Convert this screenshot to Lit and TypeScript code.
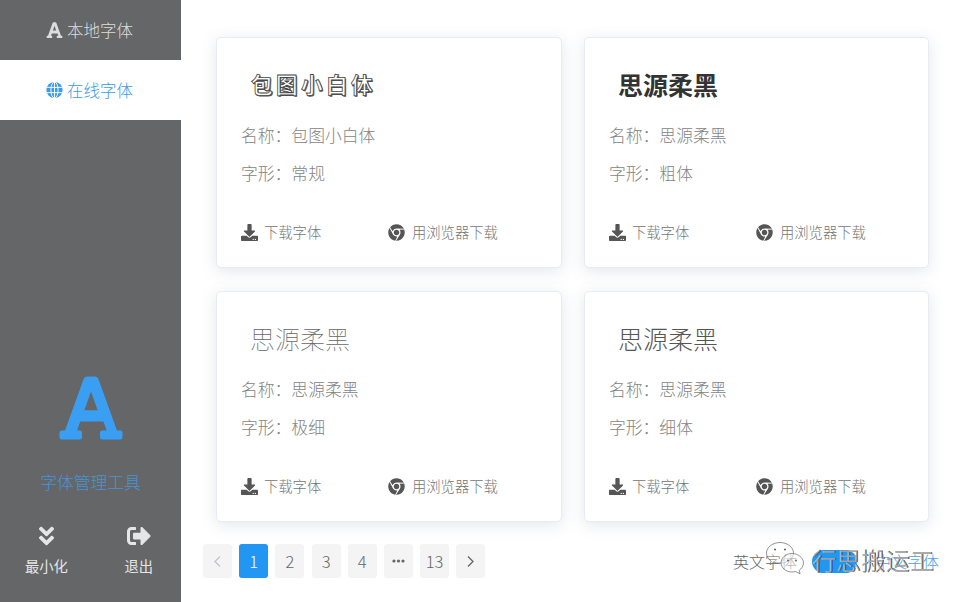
import { LitElement, html, css, svg } from "lit";
import { customElement } from "lit/decorators.js";

const FONT = svg`<path d="M432 416h-23.41L277.88 53.69A32 32 0 0 0 247.58 32h-47.16a32 32 0 0 0-30.3 21.69L39.41 416H16a16 16 0 0 0-16 16v32a16 16 0 0 0 16 16h128a16 16 0 0 0 16-16v-32a16 16 0 0 0-16-16h-19.12l22.75-64h164.74l22.75 64H304a16 16 0 0 0-16 16v32a16 16 0 0 0 16 16h128a16 16 0 0 0 16-16v-32a16 16 0 0 0-16-16zM176.85 272L224 138.32 271.15 272H176.85z"/>`;
const DOWNLOAD = svg`<path d="M216 0h80c13.3 0 24 10.7 24 24v168h87.7c17.8 0 26.7 21.5 14.1 34.1L269.7 378.3c-7.5 7.5-19.8 7.5-27.3 0L90.1 226.1c-12.6-12.6-3.7-34.1 14.1-34.1H192V24c0-13.3 10.7-24 24-24zm296 376v112c0 13.3-10.7 24-24 24H24c-13.3 0-24-10.7-24-24V376c0-13.3 10.7-24 24-24h146.7l49 49c20.1 20.1 52.5 20.1 72.6 0l49-49H488c13.3 0 24 10.7 24 24zm-124 88c0-11-9-20-20-20s-20 9-20 20 9 20 20 20 20-9 20-20zm64 0c0-11-9-20-20-20s-20 9-20 20 9 20 20 20 20-9 20-20z"/>`;
const CHROME = svg`<path d="M131.5 217.5L55.1 100.1c47.6-59.2 119-91.8 192-92.1 42.3-.3 85.5 10.5 124.8 33.2 43.4 25.2 76.4 61.4 97.4 103L264 133.4c-58.1-3.4-113.4 29.3-132.5 84.1zm32.9 38.5c0 46.2 37.4 83.6 83.6 83.6s83.6-37.4 83.6-83.6-37.4-83.6-83.6-83.6-83.6 37.3-83.6 83.6zm314.9-89.2L339.6 174c37.9 44.3 38.5 108.2 6.6 157.2L234.1 503.6c46.5 2.5 94.4-7.7 137.8-32.9 107.4-62 150.9-192 107.4-303.9zM133.7 303.6L40.4 120.1C14.9 159.1 0 205.9 0 256c0 124 90.8 226.7 209.5 244.9l63.7-124.8c-57.6 10.8-113.2-20.8-139.5-72.5z"/>`;

const fonts = [
  { title: "包图小白体", name: "包图小白体", style: "常规", cls: "fancy" },
  { title: "思源柔黑", name: "思源柔黑", style: "粗体", cls: "bold" },
  { title: "思源柔黑", name: "思源柔黑", style: "极细", cls: "thin" },
  { title: "思源柔黑", name: "思源柔黑", style: "细体", cls: "light" },
];

@customElement("app-root")
export class AppRoot extends LitElement {
  static styles = css`
    :host {
      display: flex;
      position: relative;
      width: 963px;
      height: 602px;
      overflow: hidden;
      background: #fff;
      font-family: "Noto Sans CJK SC", "Noto Sans", sans-serif;
      font-weight: 300;
      color: #666;
    }
    svg { fill: currentColor; display: block; flex: none; }
    .side {
      width: 181px;
      flex: none;
      background: #656668;
      display: flex;
      flex-direction: column;
      color: #ddd;
    }
    .nav {
      height: 60px;
      display: flex;
      align-items: center;
      justify-content: center;
      gap: 4px;
      font-size: 16.5px;
      padding-right: 2px;
    }
    .nav.on { background: #fff; color: #3a9be8; }
    .nav svg { width: 17px; height: 18px; }
    .brand {
      margin-top: auto;
      margin-bottom: 8px;
      display: flex;
      flex-direction: column;
      align-items: center;
      color: #3a9ff2;
    }
    .brand svg { width: 64px; height: 72px; }
    .brand .tool { font-size: 16.8px; line-height: 24px; margin-top: 26px; color: #4794d6; }
    .ops {
      display: flex;
      justify-content: space-between;
      padding: 22px 28px 0 25px;
      height: 100px;
      box-sizing: border-box;
    }
    .op { display: flex; flex-direction: column; align-items: center; font-size: 14.3px; color: #e6e6e6; font-weight: 400; }
    .op svg { height: 24px; margin-bottom: 7px; }
    .op .dbl { width: 15px; }
    .op .out { width: 24px; }
    .main { flex: 1; min-width: 0; display: flex; flex-direction: column; padding: 37px 0 0 22px; }
    .grid {
      display: grid;
      grid-template-columns: 346px 345px;
      grid-auto-rows: 231px;
      column-gap: 22px;
      row-gap: 23px;
      margin-left: 13px;
    }
    .card {
      background: #fff;
      border: 1px solid #e9ebef;
      border-radius: 5px;
      box-shadow: 0 3px 16px rgba(90, 100, 130, 0.16);
      box-sizing: border-box;
      padding: 0 24px;
      display: flex;
      flex-direction: column;
    }
    .title { font-size: 25px; line-height: 36px; margin: 28px 0 0 9px; height: 36px; white-space: nowrap; }
    .title.bold { font-weight: 700; color: #333; }
    .title.thin { font-weight: 100; color: #666; }
    .title.light { font-weight: 300; color: #555; }
    .title.fancy {
      font-weight: 700;
      font-size: 21.6px;
      letter-spacing: 3.4px;
      margin-left: 10px;
      color: #fff;
      -webkit-text-stroke: 0.8px #444;
      text-shadow: 1px 1px 0 #555;
    }
    .row { font-size: 16.8px; line-height: 24px; color: #848484; white-space: nowrap; }
    .row.a { margin-top: 21px; }
    .row.b { margin-top: 14px; }
    .acts { display: flex; margin-top: 35px; font-size: 14.3px; line-height: 24px; color: #757575; }
    .act { display: flex; align-items: center; gap: 6px; white-space: nowrap; }
    .act svg { color: #555; width: 17px; height: 17px; }
    .act.dl { width: 147px; }
    .act + .act { gap: 7px; }
    .foot { display: flex; align-items: center; margin-top: 22px; height: 34px; }
    .pages { display: flex; gap: 7.2px; }
    .p {
      width: 29px;
      height: 34px;
      border-radius: 3px;
      background: #f4f4f5;
      display: flex;
      align-items: center;
      justify-content: center;
      font-size: 16.5px;
      color: #666;
    }
    .p.on { background: #2196f3; color: #fff; }
    .p.off { color: #c0c4cc; }
    .p svg { width: 13px; height: 13px; fill: none; stroke: currentColor; stroke-width: 1.3; }
    .p .more { fill: currentColor; stroke: none; width: 13px; height: 4px; }
    .switch { margin-left: auto; display: flex; align-items: center; font-size: 16px; color: #666; padding-right: 24px; white-space: nowrap; }
    .pill { width: 45px; height: 23px; border-radius: 12px; background: #2196f3; margin: 0 18px 0 15px; }
    .cn { color: #4ba3ea; }
    .mark { position: absolute; left: 765px; top: 541px; display: flex; align-items: center; gap: 8px; }
    .mark svg { width: 39px; height: 36px; fill: none; }
    .mark span {
      font-family: "Noto Sans CJK SC", sans-serif;
      font-size: 24.3px;
      font-weight: 400;
      line-height: 36px;
      color: rgba(255, 255, 255, 0.55);
      text-shadow: 1px 0 0 rgba(40, 40, 40, 0.85);
      white-space: nowrap;
      position: relative;
      top: 1px;
    }
  `;

  private card(f: (typeof fonts)[number]) {
    return html`<div class="card">
      <div class="title ${f.cls}">${f.title}</div>
      <div class="row a">名称：${f.name}</div>
      <div class="row b">字形：${f.style}</div>
      <div class="acts">
        <div class="act dl"><svg viewBox="0 0 512 512">${DOWNLOAD}</svg>下载字体</div>
        <div class="act"><svg viewBox="0 0 496 512">${CHROME}</svg>用浏览器下载</div>
      </div>
    </div>`;
  }

  render() {
    return html`
      <aside class="side">
        <div class="nav"><svg viewBox="0 0 448 512">${FONT}</svg>本地字体</div>
        <div class="nav on">
          <svg viewBox="0 0 18 18">
            <circle cx="9" cy="9" r="8.6"></circle>
            <g fill="none" stroke="#fff" stroke-width="1">
              <ellipse cx="9" cy="9" rx="3.8" ry="8.6"></ellipse>
              <path d="M9 .4v17.2M.8 6.200h16.400M.8 11.800h16.400"></path>
            </g>
          </svg>
          在线字体
        </div>
        <div class="brand">
          <svg viewBox="0 0 448 512">${FONT}</svg>
          <div class="tool">字体管理工具</div>
        </div>
        <div class="ops">
          <div class="op">
            <svg class="dbl" viewBox="0 0 320 512"><path d="M143 256.3L7 120.3c-9.4-9.4-9.4-24.6 0-33.9l22.6-22.6c9.4-9.4 24.6-9.4 33.9 0l96.4 96.4 96.4-96.4c9.4-9.4 24.6-9.4 33.9 0L313 86.3c9.4 9.4 9.4 24.6 0 33.9l-136 136c-9.4 9.5-24.6 9.5-34 .1zm34 192l136-136c9.4-9.4 9.4-24.6 0-33.9l-22.6-22.6c-9.4-9.4-24.6-9.4-33.9 0L160 352.1l-96.4-96.4c-9.4-9.4-24.6-9.4-33.9 0L7 278.3c-9.4 9.4-9.4 24.6 0 33.9l136 136c9.4 9.5 24.6 9.5 34 .1z"></path></svg>
            最小化
          </div>
          <div class="op">
            <svg class="out" viewBox="0 0 512 512"><path d="M497 273L329 441c-15 15-41 4.5-41-17v-96H152c-13.3 0-24-10.7-24-24v-96c0-13.3 10.7-24 24-24h136V88c0-21.4 25.9-32 41-17l168 168c9.3 9.4 9.3 24.6 0 34zM192 436v-40c0-6.6-5.4-12-12-12H96c-17.7 0-32-14.3-32-32V160c0-17.7 14.3-32 32-32h84c6.6 0 12-5.4 12-12V76c0-6.6-5.4-12-12-12H96c-53 0-96 43-96 96v192c0 53 43 96 96 96h84c6.6 0 12-5.4 12-12z"></path></svg>
            退出
          </div>
        </div>
      </aside>
      <main class="main">
        <div class="grid">${fonts.map((f) => this.card(f))}</div>
        <div class="foot">
          <div class="pages">
            <div class="p off"><svg viewBox="0 0 13 13"><path d="M9 1.5L4 6.5l5 5"></path></svg></div>
            <div class="p on">1</div>
            <div class="p">2</div>
            <div class="p">3</div>
            <div class="p">4</div>
            <div class="p"><svg class="more" viewBox="0 0 13 4"><circle cx="2" cy="2" r="1.6"></circle><circle cx="6.5" cy="2" r="1.6"></circle><circle cx="11" cy="2" r="1.6"></circle></svg></div>
            <div class="p">13</div>
            <div class="p"><svg viewBox="0 0 13 13"><path d="M4 1.5l5 5-5 5"></path></svg></div>
          </div>
          <div class="switch">
            英文字体<div class="pill"></div><span class="cn">中文字体</span>
          </div>
        </div>
      </main>
      <div class="mark">
        <svg viewBox="0 0 39 36">
          <g stroke="#666" stroke-width="0.7">
            <path fill="rgba(255,255,255,.3)" d="M15 1.500C8 1.500 1.500 6 1.500 12c0 3.300 1.800 6 4.700 8l-1.200 3.600 4.200-2.100c1.500.4 3.500.6 5.800.6 7 0 13.500-4.500 13.500-10.100C28.500 6 22 1.500 15 1.500z"></path>
            <path fill="rgba(255,255,255,.55)" d="M27 12.500c-6 0-11 4.300-11 9.300S21 31 27 31c1.300 0 2.500-.2 3.700-.5l4.400 2.400-1-3.500c2.400-1.600 4.400-4.400 4.400-7.600C38.500 16.800 33 12.500 27 12.500z"></path>
          </g>
          <g fill="#666"><circle cx="10" cy="8.500" r="1.100"></circle><circle cx="20" cy="8.500" r="1.100"></circle><circle cx="23" cy="19.500" r="1"></circle><circle cx="31" cy="19.500" r="1"></circle></g>
        </svg>
        <span>行思搬运工</span>
      </div>
    `;
  }
}
